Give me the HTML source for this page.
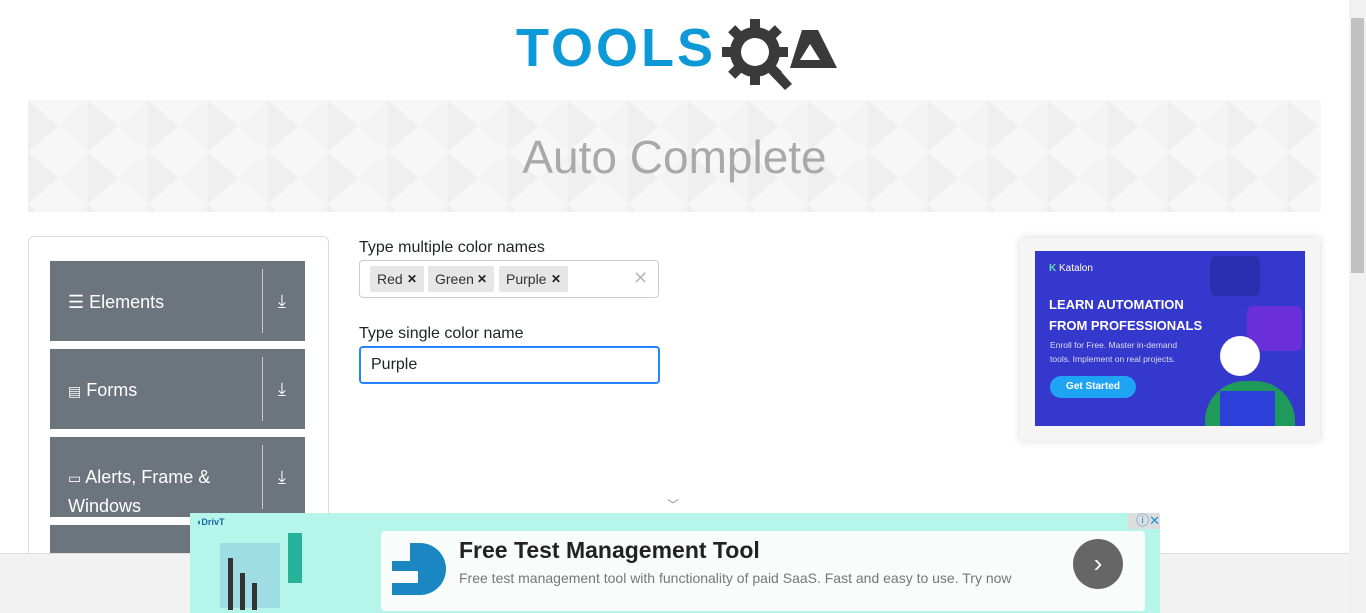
<!DOCTYPE html>
<html style="overflow:hidden;height:613px"><head><meta charset="utf-8"><style>
*{box-sizing:border-box;margin:0;padding:0}
body{width:1366px;height:613px;overflow:hidden;background:#fff;font-family:"Liberation Sans",sans-serif;position:relative;color:#212529}
.abs{position:absolute}
.banner{left:28px;top:100px;width:1293px;height:112px;background:#f7f7f7;overflow:hidden}
.banner h1{position:absolute;width:100%;text-align:center;top:30px;font-weight:normal;font-size:46px;color:#a9a9a9;font-family:"Liberation Sans",sans-serif}
.card{left:28px;top:236px;width:301px;height:330px;border:1px solid #dcdcdc;border-radius:6px}
.item{position:absolute;left:50px;width:255px;height:80px;background:#6c757d;color:#fff;font-size:18px}
.item .t{position:absolute;left:18px;top:27px;line-height:28px}
.item .d{position:absolute;left:212px;top:8px;width:1px;height:64px;background:#c8c8c8}
.item .a{position:absolute;left:228px;top:30px}
label{position:absolute;font-size:16px;color:#212529}
.tag{position:absolute;top:266px;height:26px;background:#e6e6e6;border-radius:2px;font-size:14px;line-height:26px;padding-left:7px;color:#333}
.tag b{position:absolute;right:7px;font-size:12px;color:#222}
</style></head><body>
<div class="abs" style="left:516px;top:20px;font:900 54px/56px 'Liberation Sans',sans-serif;color:#0d99d8;letter-spacing:3px;">TOOLS</div>
<svg class="abs" style="left:720px;top:16px" width="120" height="76" viewBox="0 0 120 76">
<g fill="#3a3a3a"><circle cx="35" cy="36" r="25"/>
<g transform="translate(35 36)"><rect x="-5" y="-33" width="10" height="12"/><rect x="-5" y="21" width="10" height="12"/><rect x="-33" y="-5" width="12" height="10"/><rect x="21" y="-5" width="12" height="10"/>
<rect x="-5" y="-33" width="10" height="12" transform="rotate(45)"/><rect x="-5" y="-33" width="10" height="12" transform="rotate(-45)"/><rect x="-5" y="-33" width="10" height="12" transform="rotate(135)"/><rect x="-5" y="-33" width="10" height="12" transform="rotate(-135)"/></g>
<path d="M40 48 L48 41 L72 68 L65 74 Z"/>
<path d="M82 14 L98 14 L117 52 L70 52 Z"/></g>
<circle cx="35" cy="36" r="14" fill="#fff"/>
<path d="M90 28 L100 44 L80 44 Z" fill="#fff"/>
</svg>
<div class="abs banner"><svg width="1293" height="112" style="position:absolute;left:0;top:0">
<defs><pattern id="p" width="60" height="52" patternUnits="userSpaceOnUse"><path d="M0 0L30 26L0 52Z" fill="#efefef"/><path d="M60 0L30 26L60 52Z" fill="#f3f3f3"/></pattern></defs>
<rect width="1293" height="112" fill="url(#p)"/></svg><h1>Auto Complete</h1></div>
<div class="abs card"></div>
<div class="item" style="top:261px"><span class="t">☰ Elements</span><div class="d"></div><span class="a">⤓</span></div>
<div class="item" style="top:349px"><span class="t"><span style="font-size:14px">▤</span> Forms</span><div class="d"></div><span class="a">⤓</span></div>
<div class="item" style="top:437px"><span class="t" style="top:26px"><span style="font-size:14px">▭</span> Alerts, Frame &amp;<br>Windows</span><div class="d"></div><span class="a">⤓</span></div>
<div class="item" style="top:525px"></div>
<label style="left:359px;top:239px">Type multiple color names</label>
<div class="abs" style="left:359px;top:260px;width:300px;height:38px;border:1px solid #ccc;border-radius:4px"></div>
<div class="tag" style="left:370px;width:54px">Red<b>✕</b></div>
<div class="tag" style="left:428px;width:66px">Green<b>✕</b></div>
<div class="tag" style="left:499px;width:69px">Purple<b>✕</b></div>
<div class="abs" style="left:633px;top:268px;color:#bbb;font-size:18px">✕</div>
<label style="left:359px;top:325px">Type single color name</label>
<div class="abs" style="left:359px;top:346px;width:301px;height:38px;border:2px solid #2684ff;border-radius:4px;font-size:16px;padding:8px 10px">Purple</div>
<div class="abs" style="left:667px;top:496px;color:#888;font-size:12px">﹀</div>
<div class="abs" style="left:1020px;top:238px;width:300px;height:203px;background:#f5f5f5;box-shadow:0 0 8px rgba(0,0,0,.15)"></div>
<div class="abs" style="left:1035px;top:251px;width:270px;height:175px;background:#3538cd;color:#fff;overflow:hidden">
<div class="abs" style="left:14px;top:12px;font-size:10px"><b style="color:#5fe0a0">K</b> Katalon</div>
<div class="abs" style="left:14px;top:43px;font-size:13px;font-weight:bold;line-height:21px">LEARN AUTOMATION<br>FROM PROFESSIONALS</div>
<div class="abs" style="left:15px;top:87px;font-size:8.5px;line-height:14px;color:#dde">Enroll for Free. Master in-demand<br>tools. Implement on real projects.</div>
<div class="abs" style="left:15px;top:125px;width:86px;height:22px;border-radius:11px;background:#1fa4f5;font-size:10px;font-weight:bold;text-align:center;line-height:22px">Get Started</div>
<div class="abs" style="left:175px;top:5px;width:50px;height:40px;background:#2a2fb0;border-radius:6px"></div>
<div class="abs" style="left:212px;top:55px;width:55px;height:45px;background:#6a2fd8;border-radius:6px"></div>
<div class="abs" style="left:170px;top:130px;width:90px;height:45px;background:#1f9a5a;border-radius:40px 40px 0 0"></div>
<div class="abs" style="left:185px;top:85px;width:40px;height:40px;background:#fff;border-radius:50%"></div>
<div class="abs" style="left:185px;top:140px;width:55px;height:35px;background:#2c3fd8"></div>
</div>
<div class="abs" style="left:0;top:553px;width:1349px;height:60px;background:#f2f2f2;border-top:1px solid #ddd"></div>
<div class="abs" style="left:1349px;top:0;width:17px;height:613px;background:#f1f1f1"><div style="position:absolute;left:2px;top:18px;width:13px;height:255px;background:#c1c1c1"></div></div>
<div class="abs" style="left:190px;top:513px;width:970px;height:100px;background:#b6f5ea;overflow:hidden">
<div class="abs" style="left:6px;top:4px;font-size:9px;font-weight:bold;color:#1a6aa8">◖DrivT</div>
<div class="abs" style="left:30px;top:30px;width:60px;height:65px;background:#9fdde5"></div>
<div class="abs" style="left:38px;top:45px;width:5px;height:52px;background:#333"></div>
<div class="abs" style="left:50px;top:60px;width:5px;height:37px;background:#333"></div>
<div class="abs" style="left:62px;top:70px;width:5px;height:27px;background:#333"></div>
<div class="abs" style="left:98px;top:20px;width:14px;height:50px;background:#27b39a"></div>
<div class="abs" style="left:938px;top:0;width:32px;height:16px;text-align:right;color:#1a8fd6;font-size:13px;line-height:16px;background:#ddd">ⓘ✕</div>
<div class="abs" style="left:191px;top:18px;width:764px;height:80px;background:#f8fdfc;border-radius:4px"></div>
<div class="abs" style="left:202px;top:30px;width:54px;height:52px;background:#1a86c2;border-radius:0 26px 26px 0"></div>
<div class="abs" style="left:202px;top:30px;width:18px;height:18px;background:#f8fdfc"></div>
<div class="abs" style="left:202px;top:58px;width:26px;height:12px;background:#fff"></div>
<div class="abs" style="left:269px;top:24px;font-size:23px;font-weight:bold;color:#222">Free Test Management Tool</div>
<div class="abs" style="left:269px;top:57px;font-size:14px;color:#777">Free test management tool with functionality of paid SaaS. Fast and easy to use. Try now</div>
<div class="abs" style="left:883px;top:26px;width:50px;height:50px;border-radius:50%;background:#666;color:#fff;font-size:26px;text-align:center;line-height:48px">›</div>
</div>
</body></html>
